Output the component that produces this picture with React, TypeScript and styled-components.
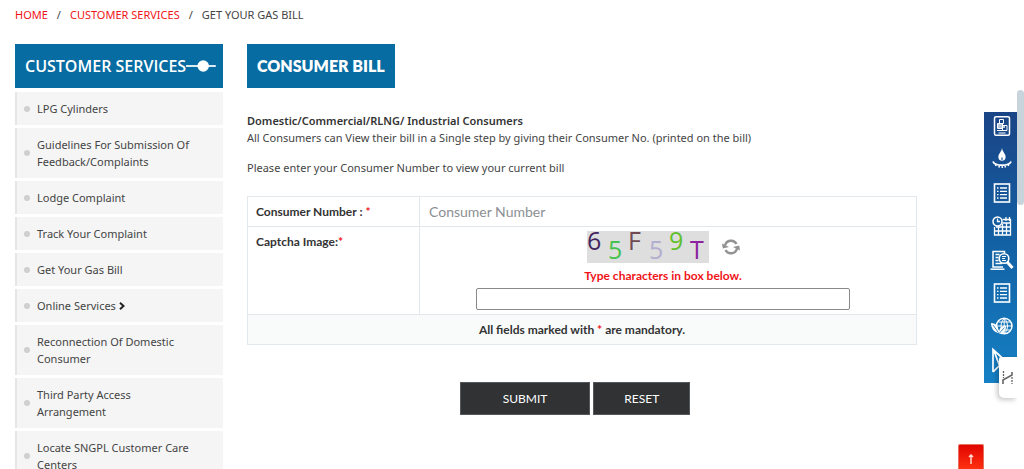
import React from "react";
import styled, { createGlobalStyle, css } from "styled-components";

const GlobalStyle = createGlobalStyle`
  *, *::before, *::after { box-sizing: border-box; }
  html { scrollbar-width: none; }
  body {
    margin: 0;
    background: #fff;
    color: #444;
    font: 11px/17px "Noto Sans", "Open Sans", sans-serif;
  }
`;

const heading = `Lato, "Open Sans", sans-serif`;

const Page = styled.div`
  padding: 6px 107px 0 15px;
`;

const Breadcrumb = styled.nav`
  display: flex;
  gap: 9px;
  text-transform: uppercase;
`;

const CrumbLink = styled.a`
  color: #f01418;
  text-decoration: none;
`;

const Columns = styled.div`
  display: grid;
  grid-template-columns: 208px minmax(0, 1fr);
  column-gap: 24px;
  align-items: start;
  margin-top: 21px;
`;

const banner = css`
  margin: 0;
  height: 44px;
  background: #076ca2;
  color: #fff;
  line-height: 44px;
  white-space: nowrap;
`;

const SideTitle = styled.h2`
  ${banner}
  display: flex;
  align-items: center;
  padding: 0 7px 0 10px;
  font-family: "Open Sans", sans-serif;
  font-size: 16px;
  font-weight: 600;
`;

const TitleMark = styled.svg`
  flex: 1;
  min-width: 0;
  height: 12px;
`;

const Menu = styled.ul`
  display: flex;
  flex-direction: column;
  gap: 3px;
  margin: 4px 0 0;
  padding: 0;
  list-style: none;
`;

const MenuItem = styled.li`
  display: flex;
  align-items: center;
  gap: 7px;
  padding: 8px 24px 8px 7px;
  border-left: 2px solid #e6e6e6;
  background: #f5f5f5;

  &::before {
    content: "";
    flex: none;
    width: 6px;
    height: 6px;
    border-radius: 50%;
    background: #cfcfcf;
  }
`;

const MenuLink = styled.a`
  color: #444;
  text-decoration: none;
`;

const Arrow = styled.svg`
  width: 6px;
  height: 8px;
  margin-left: 3px;
`;

const Main = styled.main`
  min-width: 0;
`;

const PageTitle = styled.h1`
  ${banner}
  width: fit-content;
  padding: 0 10px;
  font: 800 16px/44px ${heading};
`;

const Intro = styled.div`
  margin-top: 24px;

  p { margin: 0 0 13px; }
  strong { font-weight: 600; color: #333; }
`;

const BillTable = styled.table`
  width: 100%;
  margin-top: 20px;
  border-collapse: collapse;
  table-layout: fixed;
  font: 12px/17px ${heading};
`;

const cell = css`
  border: 1px solid #e3e8ec;
  vertical-align: top;
`;

const LabelCell = styled.th`
  ${cell}
  width: 172px;
  padding: 6px 8px;
  color: #333;
  font-weight: 700;
  text-align: left;
`;

const FieldCell = styled.td`
  ${cell}
  padding: 4px 9px;
`;

const CaptchaCell = styled.td`
  ${cell}
  padding: 4px 10px 4px 0;
`;

const NoteCell = styled.td`
  ${cell}
  padding: 6px;
  background: #f9fbfb;
  color: #333;
  font-weight: 700;
  text-align: center;
`;

const Star = styled.span`
  color: #f01418;
`;

const NumberInput = styled.input`
  display: block;
  width: 100%;
  height: 21px;
  padding: 0;
  border: 0;
  outline: 0;
  background: transparent;
  color: #444;
  font: 14px/21px ${heading};

  &::placeholder { color: #8b8f93; opacity: 1; }
`;

const CaptchaBox = styled.div`
  display: flex;
  flex-direction: column;
  align-items: center;
`;

const CaptchaRow = styled.div`
  display: flex;
  align-items: center;
  gap: 13px;
`;

const CaptchaImage = styled.svg`
  width: 122px;
  height: 32px;
  overflow: visible;
  background: #dedede;
  font-family: "Open Sans", sans-serif;
`;

const RefreshButton = styled.button`
  display: flex;
  padding: 0;
  border: 0;
  background: none;
  cursor: pointer;
`;

const CaptchaHint = styled.label`
  margin: 4px 0;
  color: #f01418;
  font-weight: 700;
`;

const CaptchaInput = styled.input`
  width: 77%;
  height: 22px;
  border: 1px solid #8a8a8a;
  border-radius: 2px;
  background: #fff;
`;

const Actions = styled.div`
  display: flex;
  justify-content: center;
  gap: 3px;
  margin-top: 37px;
  padding-right: 14px;
`;

const ActionButton = styled.button<{ $wide?: boolean }>`
  height: 33px;
  padding: 0 ${(p) => (p.$wide ? 42 : 30)}px;
  border: 1px solid #55585a;
  border-radius: 0;
  background: #303234;
  color: #fff;
  font: 12px/17px ${heading};
  text-transform: uppercase;
`;

const Dock = styled.nav`
  position: fixed;
  top: 112px;
  right: 7px;
  display: flex;
  flex-direction: column;
  align-items: center;
  justify-content: space-between;
  width: 33px;
  height: 271px;
  padding: 4px 0 13px 3px;
  background: linear-gradient(#1a4486, #1262a5 50%, #1680c4);
`;

const DockLink = styled.a`
  display: block;
  height: 20px;
  color: #fff;
`;

const Glyph = styled.svg`
  display: block;
  width: 20px;
  height: 20px;
  fill: none;
  stroke: currentColor;
  stroke-width: 1.3;
`;

const Widget = styled.button`
  position: fixed;
  top: 357px;
  right: 7px;
  width: 18px;
  height: 41px;
  padding: 0;
  border: 0;
  border-radius: 2px 0 0 5px;
  background: #fff;
  box-shadow: -2px 2px 5px rgba(0, 0, 0, 0.22);
  clip-path: inset(-2px 0 -8px -8px);
`;

const ScrollThumb = styled.div`
  position: fixed;
  top: 90px;
  right: 0;
  width: 7px;
  height: 115px;
  border-radius: 4px;
  background: #c8d4dc;
`;

const TopLink = styled.a`
  position: fixed;
  right: 40px;
  bottom: 0;
  display: flex;
  justify-content: center;
  width: 26px;
  height: 25px;
  padding-top: 9px;
  border: 1px solid #e87060;
  border-bottom: 0;
  border-radius: 2px 2px 0 0;
  background: linear-gradient(#e00500, #ff3010);
`;

const menu = [
  "LPG Cylinders",
  "Guidelines For Submission Of Feedback/Complaints",
  "Lodge Complaint",
  "Track Your Complaint",
  "Get Your Gas Bill",
  "Online Services",
  "Reconnection Of Domestic Consumer",
  "Third Party Access Arrangement",
  "Locate SNGPL Customer Care Centers",
];

const captcha = [
  { ch: "6", x: 0, y: 19, fill: "#42265e" },
  { ch: "5", x: 21, y: 28, fill: "#46c250" },
  { ch: "F", x: 41, y: 19, fill: "#704a52" },
  { ch: "5", x: 62, y: 28, fill: "#b3aed0" },
  { ch: "9", x: 82, y: 19, fill: "#62c02c" },
  { ch: "T", x: 103, y: 28, fill: "#8c22a0" },
];

const listGlyph = (
  <>
    <rect x="2.5" y="1" width="15" height="18" strokeWidth="1.6" />
    <path d="M5 5h1.5M8 5h7M5 8.3h1.5M8 8.3h7M5 11.6h1.5M8 11.6h7M5 15h1.5M8 15h7" />
  </>
);

const dock = [
  {
    label: "Gas meter",
    art: (
      <>
        <rect x="2.5" y=".8" width="15" height="18.4" rx="1.5" strokeWidth="1.5" />
        <path d="M7.500 3.500h4v4h-4zM5.500 7.500h5v5h-5zM10.500 9.500h4.500v5h-4.500zM5 14.500h10M6.500 17h7" strokeWidth="1" />
        <path d="M6 8h4v4H6zM11 10h2v2h-2z" fill="currentColor" stroke="none" opacity=".7" />
      </>
    ),
  },
  {
    label: "Gas burner",
    art: (
      <>
        <path d="M10 -1C10.500 3 14 5 13.600 8.500 13.300 11 12 11.700 10 11.700S6.700 11 6.400 8.500C6 5 9.500 3 10 -1zM10 8C9 9.500 9.200 10.900 10 11.300 10.800 10.900 11 9.500 10 8z" fill="currentColor" fillRule="evenodd" stroke="none" />
        <path d="M1 12.500C3 17.500 17 17.500 19 12.500" strokeWidth="1.900" />
        <path d="M3.500 17l.6-1.500M7 18.700l.3-1.800M10.300 19v-1.800M13.500 18.500l-.4-1.700M16.800 16.800L16 15.300" strokeWidth="1.500" />
      </>
    ),
  },
  { label: "Bill list", art: listGlyph },
  {
    label: "Load schedule",
    art: (
      <>
        <path d="M10.500 3.500H18.500V19H2.500V11M10.500 7H18.500M4 11H18.500M2.500 15H18.500M6.500 11V19M10.500 8V19M14.500 7V19M14 1V5M17.500 1V5" strokeWidth="1.300" />
        <circle cx="5.500" cy="5.500" r="4.500" strokeWidth="1.500" />
        <path d="M5.500 2.500V5.500H8" />
      </>
    ),
  },
  {
    label: "Search documents",
    art: (
      <>
        <path d="M11 17H1V1.500H12.500V3M3.500 4.500H7.500M3.500 7.500H6.500M3.500 10.500H6.500M3.500 13.500H10" strokeWidth="1.500" />
        <path d="M-1.500 19.200H12.500" strokeWidth="1.500" />
        <circle cx="12" cy="8.500" r="4.800" strokeWidth="1.600" />
        <path d="M10 6.500H14M10 8.500H13M10 10.500H14" strokeWidth="1" />
        <path d="M15.200 12L20.500 18" strokeWidth="3" />
      </>
    ),
  },
  { label: "Tariff list", art: listGlyph },
  {
    label: "Environment",
    art: (
      <>
        <circle cx="12.200" cy="9" r="7.800" strokeWidth="1.500" />
        <path d="M12.200 1.500V16.500M4.500 9H20M6.500 5H18M8 13H18M12 1.500C8 6 8 12 12 16.500M12.400 1.500C16.500 6 16.500 12 12.400 16.500" strokeWidth="1" />
        <path d="M-1 6C4.500 6 7 10 6.500 16 1.500 15-1 11-1 6zM14 9C8 8.500 7 13 7 16.500 12 17 14 13.500 14 9zM6 15L8 19.500" fill="currentColor" stroke="none" />
        <path d="M1 8L6 15M12.500 10.500L7.500 16" stroke="#1770b3" strokeWidth=".8" />
      </>
    ),
  },
  {
    label: "Send",
    art: <path d="M1 22V-.500L19 16M1 22L7.500 15.500L19 16M7.500 15.500L2 1" strokeWidth="1.700" />,
  },
];

export default function App() {
  return (
    <>
      <GlobalStyle />
      <Page>
        <Breadcrumb aria-label="Breadcrumb">
          <CrumbLink href="#home">Home</CrumbLink>
          <span>/</span>
          <CrumbLink href="#services">Customer Services</CrumbLink>
          <span>/</span>
          <span>Get Your Gas Bill</span>
        </Breadcrumb>
        <Columns>
          <aside>
            <SideTitle>
              CUSTOMER SERVICES
              <TitleMark viewBox="0 0 26 12" preserveAspectRatio="xMaxYMid slice" aria-hidden="true">
                <path d="M0 6H26" stroke="#fff" strokeWidth="1.500" />
                <circle cx="15" cy="6" r="5" fill="#fff" />
              </TitleMark>
            </SideTitle>
            <Menu>
              {menu.map((item) => (
                <MenuItem key={item}>
                  <MenuLink href="#menu">
                    {item}
                    {item === "Online Services" && (
                      <Arrow viewBox="0 0 6 8" aria-hidden="true">
                        <path d="M1 .8L4.500 4L1 7.200" fill="none" stroke="#222" strokeWidth="2" />
                      </Arrow>
                    )}
                  </MenuLink>
                </MenuItem>
              ))}
            </Menu>
          </aside>
          <Main>
            <PageTitle>CONSUMER BILL</PageTitle>
            <Intro>
              <p>
                <strong>Domestic/Commercial/RLNG/ Industrial Consumers</strong>
                <br />
                All Consumers can View their bill in a Single step by giving their Consumer No. (printed on the bill)
              </p>
              <p>Please enter your Consumer Number to view your current bill</p>
            </Intro>
            <form onSubmit={(e) => e.preventDefault()}>
              <BillTable>
                <tbody>
                  <tr>
                    <LabelCell scope="row">
                      <label htmlFor="consumer">
                        Consumer Number : <Star>*</Star>
                      </label>
                    </LabelCell>
                    <FieldCell>
                      <NumberInput id="consumer" placeholder="Consumer Number" />
                    </FieldCell>
                  </tr>
                  <tr>
                    <LabelCell scope="row">
                      Captcha Image:<Star>*</Star>
                    </LabelCell>
                    <CaptchaCell>
                      <CaptchaBox>
                        <CaptchaRow>
                          <CaptchaImage viewBox="0 0 122 32">
                            {captcha.map((c) => (
                              <text key={c.x} x={c.x} y={c.y} fill={c.fill} fontSize="25">
                                {c.ch}
                              </text>
                            ))}
                          </CaptchaImage>
                          <RefreshButton type="button" aria-label="Refresh captcha">
                            <svg width="18" height="16" viewBox="0 0 18 16" aria-hidden="true">
                              <path d="M3 6.500A6.200 6.200 0 0 1 14.500 5M15 9.500A6.200 6.200 0 0 1 3.500 11" fill="none" stroke="#929292" strokeWidth="2.400" />
                              <path d="M0 4.500L.8 9.500L7 8zM18 11.500L17.200 6.500L11 8z" fill="#929292" />
                            </svg>
                          </RefreshButton>
                        </CaptchaRow>
                        <CaptchaHint htmlFor="captcha">Type characters in box below.</CaptchaHint>
                        <CaptchaInput id="captcha" />
                      </CaptchaBox>
                    </CaptchaCell>
                  </tr>
                  <tr>
                    <NoteCell colSpan={2}>
                      All fields marked with <Star>*</Star> are mandatory.
                    </NoteCell>
                  </tr>
                </tbody>
              </BillTable>
              <Actions>
                <ActionButton type="submit" $wide>Submit</ActionButton>
                <ActionButton type="reset">Reset</ActionButton>
              </Actions>
            </form>
          </Main>
        </Columns>
      </Page>
      <Dock aria-label="Quick links">
        {dock.map((d) => (
          <DockLink key={d.label} href="#quick" aria-label={d.label}>
            <Glyph viewBox="0 0 20 20" overflow="visible" aria-hidden="true">
              {d.art}
            </Glyph>
          </DockLink>
        ))}
      </Dock>
      <Widget type="button" aria-label="Open assistant">
        <svg width="18" height="41" viewBox="0 0 18 41" fill="none" stroke="#666" aria-hidden="true">
          <path d="M4 25V23L13 18V15M4 27V25" strokeWidth="1.600" />
          <path d="M4.500 14V21M13 20V27" strokeDasharray="2 1" strokeWidth="1.300" />
        </svg>
      </Widget>
      <ScrollThumb />
      <TopLink href="#top" aria-label="Back to top">
        <svg width="6" height="10" viewBox="0 0 6 10" fill="none" stroke="#ffd8d0" aria-hidden="true">
          <path d="M3 10V1M1 3L3 1L5 3" strokeWidth="1.500" />
        </svg>
      </TopLink>
    </>
  );
}
